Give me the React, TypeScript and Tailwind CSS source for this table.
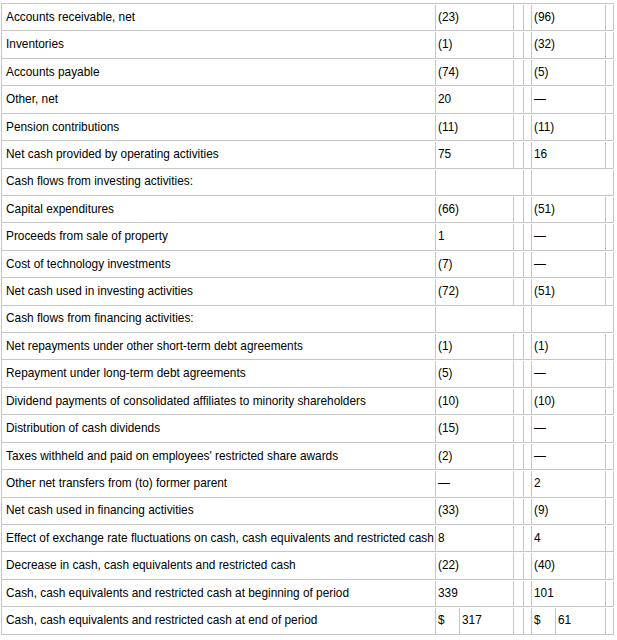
import { JSX } from "react";

type Row =
  | { kind: "data"; label: string; a: string; b: string; dollar?: boolean }
  | { kind: "head"; label: string };

const rows: Row[] = [
  { kind: "data", label: "Accounts receivable, net", a: "(23)", b: "(96)" },
  { kind: "data", label: "Inventories", a: "(1)", b: "(32)" },
  { kind: "data", label: "Accounts payable", a: "(74)", b: "(5)" },
  { kind: "data", label: "Other, net", a: "20", b: "—" },
  { kind: "data", label: "Pension contributions", a: "(11)", b: "(11)" },
  { kind: "data", label: "Net cash provided by operating activities", a: "75", b: "16" },
  { kind: "head", label: "Cash flows from investing activities:" },
  { kind: "data", label: "Capital expenditures", a: "(66)", b: "(51)" },
  { kind: "data", label: "Proceeds from sale of property", a: "1", b: "—" },
  { kind: "data", label: "Cost of technology investments", a: "(7)", b: "—" },
  { kind: "data", label: "Net cash used in investing activities", a: "(72)", b: "(51)" },
  { kind: "head", label: "Cash flows from financing activities:" },
  { kind: "data", label: "Net repayments under other short-term debt agreements", a: "(1)", b: "(1)" },
  { kind: "data", label: "Repayment under long-term debt agreements", a: "(5)", b: "—" },
  { kind: "data", label: "Dividend payments of consolidated affiliates to minority shareholders", a: "(10)", b: "(10)" },
  { kind: "data", label: "Distribution of cash dividends", a: "(15)", b: "—" },
  { kind: "data", label: "Taxes withheld and paid on employees' restricted share awards", a: "(2)", b: "—" },
  { kind: "data", label: "Other net transfers from (to) former parent", a: "—", b: "2" },
  { kind: "data", label: "Net cash used in financing activities", a: "(33)", b: "(9)" },
  { kind: "data", label: "Effect of exchange rate fluctuations on cash, cash equivalents and restricted cash", a: "8", b: "4" },
  { kind: "data", label: "Decrease in cash, cash equivalents and restricted cash", a: "(22)", b: "(40)" },
  { kind: "data", label: "Cash, cash equivalents and restricted cash at beginning of period", a: "339", b: "101" },
  { kind: "data", label: "Cash, cash equivalents and restricted cash at end of period", a: "317", b: "61", dollar: true },
];

export default function App(): JSX.Element {
  return (
    <div className="w-[617px] h-[640px] bg-white pt-[3px] font-['Liberation_Sans',Arial,sans-serif] text-[11.85px] text-black">
      <div className="ml-px w-[613px] border-l border-t border-[#c6c6c6]">
        {rows.map((r, i) =>
          r.kind === "head" ? (
            <div key={i} className="flex h-[27.43px] pt-px border-b border-[#c6c6c6]">
              <div className="w-[434px] border-r border-[#c6c6c6] pl-[4px] flex items-center whitespace-nowrap">
                {r.label}
              </div>
              <div className="w-[88px] border-r border-[#c6c6c6]" />
              <div className="w-[8px] border-r border-[#c6c6c6]" />
              <div className="w-[82px] border-r border-[#c6c6c6]" />
            </div>
          ) : (
            <div key={i} className="flex h-[27.43px] pt-px border-b border-[#c6c6c6]">
              <div className="w-[434px] border-r border-[#c6c6c6] pl-[4px] flex items-center whitespace-nowrap">
                {r.label}
              </div>
              {r.dollar ? (
                <>
                  <div className="w-[24px] border-r border-[#c6c6c6] pl-[2px] flex items-center">$</div>
                  <div className="w-[54px] border-r border-[#c6c6c6] pl-[2px] flex items-center">{r.a}</div>
                </>
              ) : (
                <div className="w-[78px] border-r border-[#c6c6c6] pl-[2px] flex items-center">{r.a}</div>
              )}
              <div className="w-[10px] border-r border-[#c6c6c6]" />
              <div className="w-[8px] border-r border-[#c6c6c6]" />
              {r.dollar ? (
                <>
                  <div className="w-[24px] border-r border-[#c6c6c6] pl-[2px] flex items-center">$</div>
                  <div className="w-[50px] border-r border-[#c6c6c6] pl-[2px] flex items-center">{r.b}</div>
                </>
              ) : (
                <div className="w-[74px] border-r border-[#c6c6c6] pl-[2px] flex items-center">{r.b}</div>
              )}
              <div className="w-[8px] border-r border-[#c6c6c6]" />
            </div>
          )
        )}
      </div>
    </div>
  );
}
